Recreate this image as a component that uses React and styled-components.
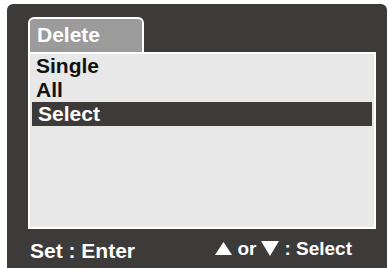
import React from 'react';
import styled, { createGlobalStyle } from 'styled-components';

const GlobalStyle = createGlobalStyle`
  html, body {
    margin: 0;
    padding: 0;
    background: #ffffff;
  }
  body {
    font-family: "Liberation Sans", Arial, sans-serif;
  }
`;

const Screen = styled.div`
  box-sizing: border-box;
  width: 380px;
  height: 264px;
  margin: 4px 3px 0 7px;
  padding: 13px 12px 0 21px;
  background: #3d3b39;
  border-radius: 6px 6px 0 0;
  display: flex;
  flex-direction: column;
`;

const Tab = styled.div`
  box-sizing: border-box;
  width: 116px;
  height: 36px;
  padding: 4px 0 0 7px;
  background: #9b9b9b;
  border: 2px solid #ffffff;
  border-bottom: none;
  border-radius: 6px 6px 0 0;
  color: #ffffff;
  font-size: 21px;
  font-weight: bold;
  line-height: 24px;
`;

const ListBox = styled.div`
  box-sizing: border-box;
  width: 348px;
  height: 177px;
  margin-top: -1px;
  background: #e8e8e8;
  border: 2px solid #ffffff;
  display: flex;
  flex-direction: column;
`;

const Item = styled.div`
  height: 24px;
  margin: 0 2px;
  padding-left: ${(p) => (p.$active ? '6px' : '4px')};
  font-size: 21px;
  font-weight: bold;
  line-height: 24px;
  color: ${(p) => (p.$active ? '#ffffff' : '#111111')};
  background: ${(p) => (p.$active ? '#3d3b39' : 'transparent')};
`;

const Footer = styled.div`
  flex: 1;
  display: flex;
  align-items: center;
  justify-content: space-between;
  padding: 5px 23px 0 2px;
  color: #ffffff;
  font-weight: bold;
`;

const Action = styled.span`
  font-size: 21px;
`;

const Hint = styled.div`
  display: flex;
  align-items: center;
  gap: 5px;
  margin-bottom: 5px;
  font-size: 19px;
`;

const Arrow = ({ down }) =>
  down ? (
    <svg width="18" height="15" viewBox="0 0 18 15">
      <polygon points="0,0 18,0 9,15" fill="#ffffff" />
    </svg>
  ) : (
    <svg width="17" height="13" viewBox="0 0 17 13">
      <polygon points="8.5,0 17,13 0,13" fill="#ffffff" />
    </svg>
  );

const options = ['Single', 'All', 'Select'];

export default function App() {
  return (
    <>
      <GlobalStyle />
      <Screen>
        <Tab>Delete</Tab>
        <ListBox>
          {options.map((o) => (
            <Item key={o} $active={o === 'Select'}>
              {o}
            </Item>
          ))}
        </ListBox>
        <Footer>
          <Action>Set : Enter</Action>
          <Hint>
            <Arrow />
            <span>or</span>
            <Arrow down />
            <span>: Select</span>
          </Hint>
        </Footer>
      </Screen>
    </>
  );
}
